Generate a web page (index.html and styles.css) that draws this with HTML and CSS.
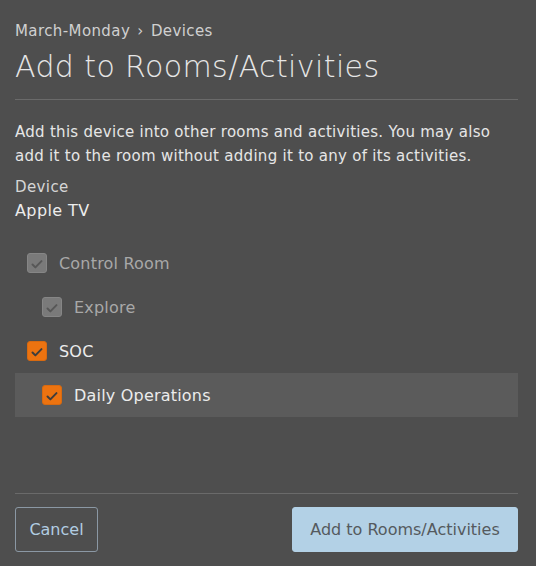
FILE: index.html
```html
<!DOCTYPE html>
<html>
<head>
<meta charset="utf-8">
<link rel="stylesheet" href="styles.css">
</head>
<body>
<div class="dialog">
  <header class="head">
    <div class="crumbs">March-Monday <span class="sep">›</span> Devices</div>
    <h1 class="title">Add to Rooms/Activities</h1>
  </header>
  <div class="body">
    <p class="desc">Add this device into other rooms and activities. You may also add it to the room without adding it to any of its activities.</p>
    <div class="label">Device</div>
    <div class="value">Apple TV</div>
    <ul class="tree">
      <li class="row disabled"><span class="cb"><svg viewBox="0 0 20 20"><path d="M5 10.5l3.2 3.2L15 6.8"/></svg></span><span class="txt">Control Room</span></li>
      <li class="row sub disabled"><span class="cb"><svg viewBox="0 0 20 20"><path d="M5 10.5l3.2 3.2L15 6.8"/></svg></span><span class="txt">Explore</span></li>
      <li class="row on"><span class="cb"><svg viewBox="0 0 20 20"><path d="M5 10.5l3.2 3.2L15 6.8"/></svg></span><span class="txt">SOC</span></li>
      <li class="row sub on hl"><span class="cb"><svg viewBox="0 0 20 20"><path d="M5 10.5l3.2 3.2L15 6.8"/></svg></span><span class="txt">Daily Operations</span></li>
    </ul>
  </div>
  <footer class="foot">
    <button class="btn cancel">Cancel</button>
    <button class="btn primary">Add to Rooms/Activities</button>
  </footer>
</div>
</body>
</html>
```
FILE: styles.css
```css
html, body {
  margin: 0;
  padding: 0;
  background: #4e4e4e;
}
body {
  font-family: "DejaVu Sans", "Noto Sans", sans-serif;
  color: #e4e4e4;
}
.dialog {
  width: 536px;
  height: 566px;
  box-sizing: border-box;
  padding: 0 18px 0 15px;
  display: flex;
  flex-direction: column;
}
.head {
  padding-top: 20px;
  border-bottom: 1px solid #6a6a6a;
  padding-bottom: 13px;
}
.crumbs {
  font-size: 15px;
  line-height: 22px;
  color: #d0d0d0;
  letter-spacing: 0.4px;
}
.sep { margin: 0 2px; }
.title {
  margin: 5px 0 0;
  font-size: 30px;
  line-height: 39px;
  font-weight: 200;
  letter-spacing: 0.4px;
  color: #e6e6e6;
}
.body { flex: 1; }
.desc {
  margin: 20px 0 0;
  font-size: 15px;
  line-height: 24px;
  letter-spacing: 0.28px;
  color: #e6e6e6;
}
.label {
  margin-top: 7px;
  font-size: 15px;
  line-height: 24px;
  letter-spacing: 0.4px;
  color: #d6d6d6;
}
.value {
  font-size: 16px;
  line-height: 24px;
  letter-spacing: 0.4px;
  color: #ececec;
}
.tree {
  list-style: none;
  margin: 18px 0 0;
  padding: 0;
}
.row {
  display: flex;
  align-items: center;
  height: 44px;
  padding-left: 12px;
  font-size: 16px;
  letter-spacing: 0.2px;
}
.row.sub { padding-left: 27px; }
.row.hl { background: #5b5b5b; }
.cb {
  width: 20px;
  height: 20px;
  border-radius: 3px;
  display: inline-flex;
  margin-right: 12px;
  box-sizing: border-box;
}
.cb svg { width: 20px; height: 20px; }
.cb path {
  fill: none;
  stroke-width: 2.2;
  stroke-linecap: round;
  stroke-linejoin: round;
}
.disabled .cb { background: #7a7a7a; border: 1px solid #868686; }
.disabled .cb path { stroke: #575757; }
.disabled .txt { color: #a8a8a8; }
.on .cb { background: #ec7310; border: 1px solid #d86a10; }
.on .cb path { stroke: #3d3d3d; }
.on .txt { color: #ececec; }
.foot {
  border-top: 1px solid #6a6a6a;
  height: 73px;
  display: flex;
  justify-content: space-between;
  align-items: flex-start;
  padding-top: 13px;
  box-sizing: border-box;
}
.btn {
  font-family: inherit;
  font-size: 16px;
  height: 45px;
  border-radius: 3px;
  cursor: pointer;
}
.cancel {
  width: 83px;
  background: transparent;
  border: 1px solid #8b98a4;
  color: #b2cde2;
}
.primary {
  width: 226px;
  background: #b3d1e6;
  border: 1px solid #b3d1e6;
  color: #555a5e;
}
```
